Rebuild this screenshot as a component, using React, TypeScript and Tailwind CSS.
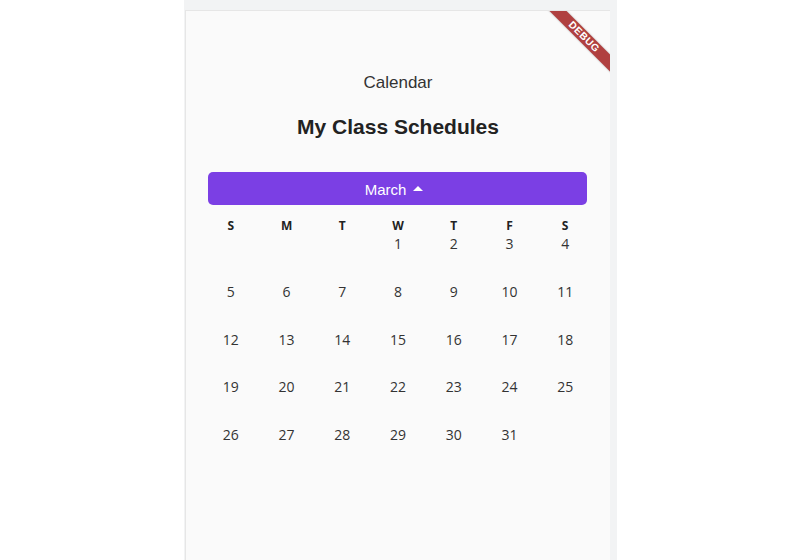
import React from "react";

const days = ["S", "M", "T", "W", "T", "F", "S"];

const weeks: (number | null)[][] = [
  [null, null, null, 1, 2, 3, 4],
  [5, 6, 7, 8, 9, 10, 11],
  [12, 13, 14, 15, 16, 17, 18],
  [19, 20, 21, 22, 23, 24, 25],
  [26, 27, 28, 29, 30, 31, null],
];

export default function App() {
  return (
    <div className="w-[800px] h-[560px] bg-white overflow-hidden">
      <div className="ml-[184px] w-[433px] h-[560px] bg-[#f2f3f4] pt-[10px] pl-[1px] pr-[7px]">
        <div className="relative h-[550px] overflow-hidden bg-[#fafafa] border-l border-t border-[#e6e6e6]">
          {/* debug banner */}
          <div className="absolute top-[20px] right-[-24px] w-[100px] h-[12px] rotate-45 bg-[#b04040] flex items-center justify-center shadow-[0_0_2px_rgba(0,0,0,0.3)]">
            <span className="text-white text-[10px] leading-none font-bold tracking-[0.6px] [font-family:'Liberation_Sans',Arial,sans-serif]">
              DEBUG
            </span>
          </div>

          <div className="pt-[61px] flex flex-col items-center">
            <div className="text-[17px] leading-[22px] text-[#333333] [font-family:'Liberation_Sans',Arial,sans-serif]">
              Calendar
            </div>
            <div className="mt-[20px] text-[21px] leading-[25px] font-bold text-[#222222] [font-family:'Liberation_Sans',Arial,sans-serif]">
              My Class Schedules
            </div>
          </div>

          <div className="pl-[22px] pr-[23px] mt-[33px]">
            <div className="h-[33px] pt-[1px] rounded-[5px] bg-[#7b3fe4] flex items-center justify-center">
              <span className="text-white text-[15px] leading-none [font-family:'Liberation_Sans',Arial,sans-serif]">
                March
              </span>
              <div className="w-[24px] h-[24px] flex items-center justify-center">
                <svg width="10" height="5" viewBox="0 0 10 5" className="mt-[-1px]">
                  <path d="M0 5 L5 0 L10 5 Z" fill="#ffffff" />
                </svg>
              </div>
            </div>
          </div>

          <div className="px-[17px] mt-[13px] [font-family:'Open_Sans','Noto_Sans',sans-serif]">
            <div className="grid grid-cols-7 h-[16px] items-center">
              {days.map((d, i) => (
                <div key={i} className="text-center text-[12px] leading-[16px] font-bold text-[#222222]">
                  {d}
                </div>
              ))}
            </div>
            {weeks.map((w, wi) => (
              <div key={wi} className="grid grid-cols-7 h-[47.75px]">
                {w.map((n, i) => (
                  <div key={i} className="text-center text-[14px] leading-[20px] text-[#333333]">
                    {n ?? ""}
                  </div>
                ))}
              </div>
            ))}
          </div>
        </div>
      </div>
    </div>
  );
}
